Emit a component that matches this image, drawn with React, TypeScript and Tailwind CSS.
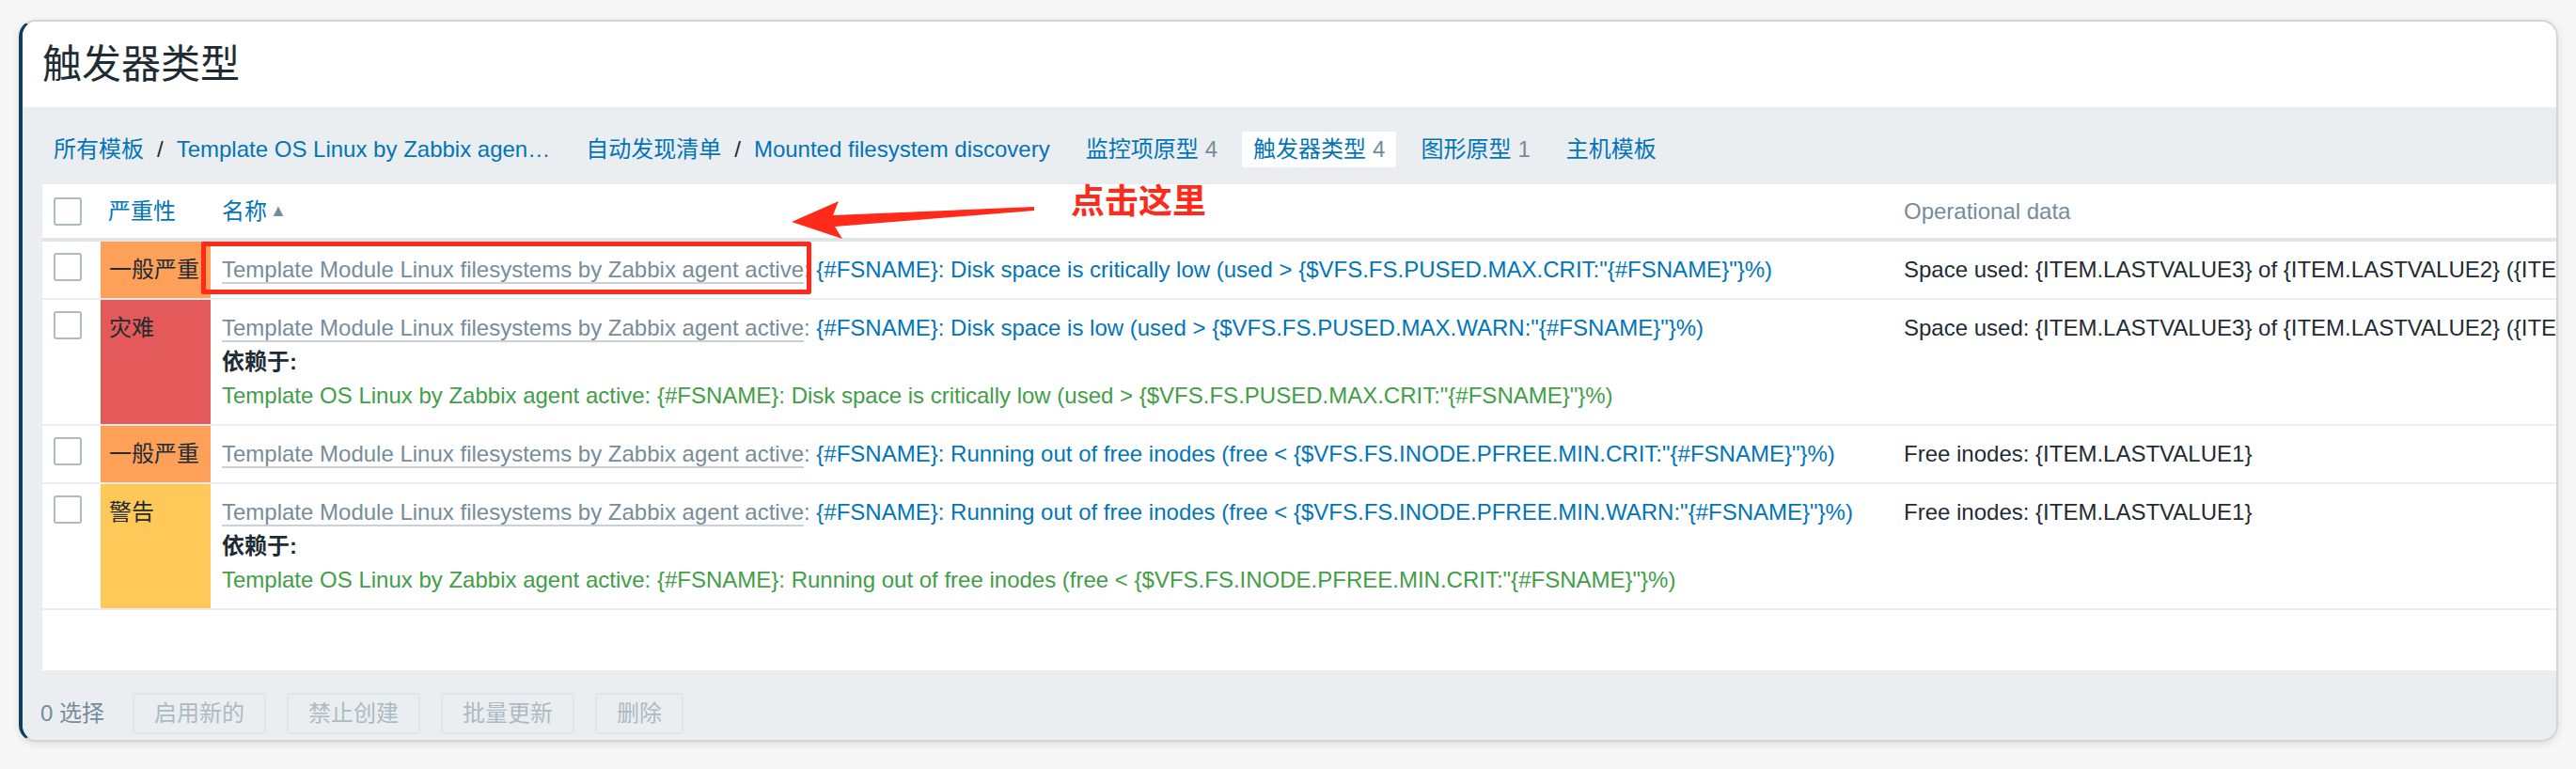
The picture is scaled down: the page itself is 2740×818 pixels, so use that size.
import React from "react";

const FONT = "font-['Liberation_Sans','Noto_Sans_CJK_SC',sans-serif]";

type Row = {
  sev: string;
  sevBg: string;
  main: string;
  dep?: string;
  op: string;
};

const TEMPLATE = "Template Module Linux filesystems by Zabbix agent active";

const rows: Row[] = [
  {
    sev: "一般严重",
    sevBg: "bg-[#ffa059]",
    main: '{#FSNAME}: Disk space is critically low (used > {$VFS.FS.PUSED.MAX.CRIT:"{#FSNAME}"}%)',
    op: "Space used: {ITEM.LASTVALUE3} of {ITEM.LASTVALUE2} ({ITEM.LASTVALUE1})",
  },
  {
    sev: "灾难",
    sevBg: "bg-[#e45959]",
    main: '{#FSNAME}: Disk space is low (used > {$VFS.FS.PUSED.MAX.WARN:"{#FSNAME}"}%)',
    dep: 'Template OS Linux by Zabbix agent active: {#FSNAME}: Disk space is critically low (used > {$VFS.FS.PUSED.MAX.CRIT:"{#FSNAME}"}%)',
    op: "Space used: {ITEM.LASTVALUE3} of {ITEM.LASTVALUE2} ({ITEM.LASTVALUE1})",
  },
  {
    sev: "一般严重",
    sevBg: "bg-[#ffa059]",
    main: '{#FSNAME}: Running out of free inodes (free < {$VFS.FS.INODE.PFREE.MIN.CRIT:"{#FSNAME}"}%)',
    op: "Free inodes: {ITEM.LASTVALUE1}",
  },
  {
    sev: "警告",
    sevBg: "bg-[#ffc859]",
    main: '{#FSNAME}: Running out of free inodes (free < {$VFS.FS.INODE.PFREE.MIN.WARN:"{#FSNAME}"}%)',
    dep: 'Template OS Linux by Zabbix agent active: {#FSNAME}: Running out of free inodes (free < {$VFS.FS.INODE.PFREE.MIN.CRIT:"{#FSNAME}"}%)',
    op: "Free inodes: {ITEM.LASTVALUE1}",
  },
];

function Checkbox() {
  return <div className="w-[30px] h-[30px] rounded-[3px] border-2 border-[#acbbc2] bg-white shrink-0" />;
}

function NavItem({ children, selected }: { children: React.ReactNode; selected?: boolean }) {
  return (
    <div
      className={
        "h-[38px] px-[12px] flex items-center whitespace-nowrap rounded-[2px] " +
        (selected ? "bg-white" : "")
      }
    >
      {children}
    </div>
  );
}

function Btn({ children }: { children: React.ReactNode }) {
  return (
    <div className="h-[44px] px-[21px] flex items-center border-2 border-[#dfe4e7] rounded-[4px] text-[#acbbc2] bg-[#ebeef0]">
      {children}
    </div>
  );
}

export default function App() {
  return (
    <div className={"relative w-[2740px] h-[818px] bg-[#f7f7f7] pt-[21px] pl-[20px] overflow-hidden " + FONT}>
      <div className="w-[2701px] h-[768px] rounded-[18px] border-t-2 border-r-2 border-b-2 border-l-[4px] border-[#d4d4d4] border-l-[#0f3e5f] shadow-[0_2px_10px_rgba(0,0,0,0.12)] overflow-hidden">
        <div className="w-full h-full flex flex-col bg-[#ebeef0] text-[24px] text-[#1f2c33]">
          {/* header */}
          <div className="h-[91px] shrink-0 bg-white flex items-center pl-[21px]">
            <h1 className="text-[42px] leading-none text-[#1f2c33]">触发器类型</h1>
          </div>

          {/* nav */}
          <div className="shrink-0 pt-[26px] pb-[18px] pl-[21px] flex gap-[14px] leading-none">
            <NavItem>
              <span className="text-[#0275b8]">所有模板</span>
              <span className="mx-[14px] text-[#1f2c33]">/</span>
              <span className="text-[#0275b8]">Template OS Linux by Zabbix agen…</span>
            </NavItem>
            <NavItem>
              <span className="text-[#0275b8]">自动发现清单</span>
              <span className="mx-[14px] text-[#1f2c33]">/</span>
              <span className="text-[#0275b8]">Mounted filesystem discovery</span>
            </NavItem>
            <NavItem>
              <span className="text-[#0275b8]">监控项原型</span>
              <span className="ml-[7px] text-[#768d99]">4</span>
            </NavItem>
            <NavItem selected>
              <span className="text-[#0275b8]">触发器类型</span>
              <span className="ml-[7px] text-[#768d99]">4</span>
            </NavItem>
            <NavItem>
              <span className="text-[#0275b8]">图形原型</span>
              <span className="ml-[7px] text-[#768d99]">1</span>
            </NavItem>
            <NavItem>
              <span className="text-[#0275b8]">主机模板</span>
            </NavItem>
          </div>

          {/* table */}
          <div className="shrink-0 h-[517px] ml-[21px] w-[3000px] bg-white">
            <div className="h-[61px] flex items-center border-b-4 border-[#dfe4e7]">
              <div className="w-[62px] pl-[12px] shrink-0">
                <Checkbox />
              </div>
              <div className="w-[117px] pl-[8px] shrink-0 text-[#0275b8]">严重性</div>
              <div className="w-[1789px] pl-[12px] shrink-0 text-[#0275b8] flex items-center">
                名称<span className="ml-[3px] text-[18px] text-[#768d99]">▲</span>
              </div>
              <div className="pl-[12px] text-[#768d99] whitespace-nowrap">Operational data</div>
            </div>

            {rows.map((r, i) => (
              <div key={i} className="flex border-b-2 border-[#ebeef0] leading-[36px]">
                <div className="w-[62px] pl-[12px] pt-[12px] shrink-0">
                  <Checkbox />
                </div>
                <div className={"w-[117px] pl-[9px] pt-[12px] shrink-0 text-[#1f2c33] whitespace-nowrap " + r.sevBg}>
                  {r.sev}
                </div>
                <div className="w-[1789px] pl-[12px] py-[12px] shrink-0 whitespace-nowrap">
                  <div>
                    <span className="text-[#768d99] border-b-2 border-[#768d99]/40">{TEMPLATE}</span>
                    <span className="text-[#768d99]">: </span>
                    <span className="text-[#0275b8]">{r.main}</span>
                  </div>
                  {r.dep && (
                    <>
                      <div className="font-bold text-[#1f2c33]">依赖于:</div>
                      <div className="text-[#429e47]">{r.dep}</div>
                    </>
                  )}
                </div>
                <div className="pl-[12px] pt-[12px] whitespace-nowrap text-[#1f2c33]">{r.op}</div>
              </div>
            ))}
          </div>

          {/* footer */}
          <div className="flex items-center pl-[19px] pt-[24px] leading-none">
            <span className="text-[#768d99] mr-[30px]">0 选择</span>
            <div className="flex gap-[22px]">
              <Btn>启用新的</Btn>
              <Btn>禁止创建</Btn>
              <Btn>批量更新</Btn>
              <Btn>删除</Btn>
            </div>
          </div>
        </div>
      </div>

      {/* annotation: red box */}
      <div className="absolute left-[214px] top-[257px] w-[649px] h-[56px] border-[5px] border-[#ff2a1a] rounded-[2px]" />

      {/* annotation: arrow */}
      <svg className="absolute left-[838px] top-[210px]" width="264" height="46" viewBox="0 0 264 46">
        <polygon points="4,26 54,4 48,19 262,10 262,14 50,31 58,44" fill="#ff2a1a" />
      </svg>

      {/* annotation: text */}
      <div className="absolute left-[1139px] top-[195px] text-[36px] leading-[40px] font-bold text-[#ff2a1a]">
        点击这里
      </div>
    </div>
  );
}
